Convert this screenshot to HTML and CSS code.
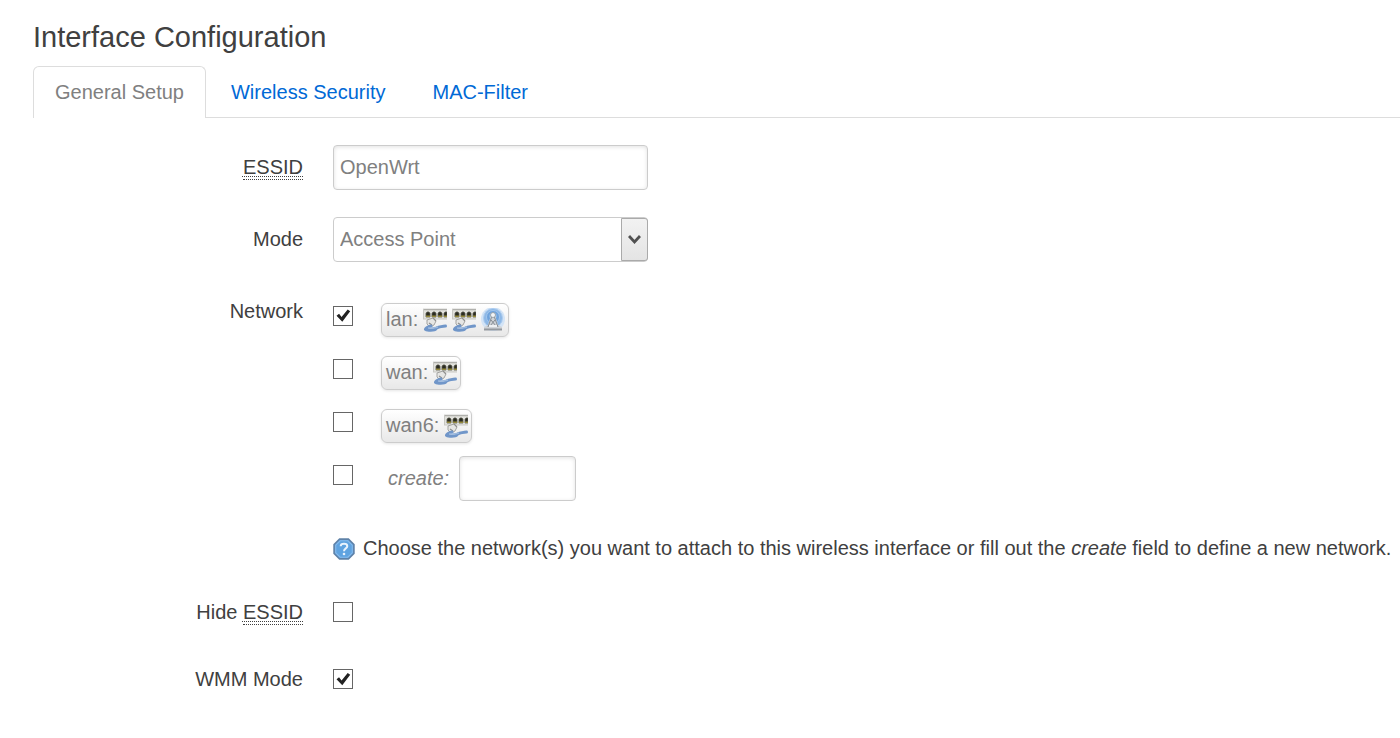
FILE: index.html
```html
<!DOCTYPE html>
<html lang="en">
<head>
    <meta charset="UTF-8">
    <meta name="viewport" content="width=device-width, initial-scale=1.0">
    <title>Interface Configuration</title>
    <link rel="stylesheet" href="styles.css">
</head>
<body>
    <!-- Shared icons -->
    <svg class="icon-defs" aria-hidden="true">
        <symbol id="icon-ethernet" viewBox="0 0 24 24">
            <rect x="0" y="1" width="24" height="10" fill="#e2e2dd"/>
            <path d="M0 1.500h24" stroke="#b0b0ac" stroke-width="1.500"/>
            <path d="M.5 1v10M0 11h24" stroke="#c8c8c4" stroke-width="1"/>
            <path d="M3 5.500l1-1.500h2l1 1.500V9H3zM9 5.500L10 4h2l1 1.500V9H9zM15 5.500L16 4h2l1 1.500V9h-4zM21 5.500L22 4h2v5h-3z" fill="#2b2c22" stroke="#56564a" stroke-width=".8"/>
            <path d="M3 7.500h4V9H3zM9 7.500h4V9H9zM15 7.500h4V9h-4zM21 7.500h3V9h-3z" fill="#958a3c"/>
            <path d="M4 12l6-2 3 3-2 4-4 2-3-3z" fill="#e6e6e4" stroke="#a3a3a1" stroke-width="1"/>
            <path d="M10 10l3 3M6 15l3 2" stroke="#8f8f8d" stroke-width="1.200" fill="none"/>
            <path d="M8 18c-3 1-6 2-5.500 3.500 1 1.500 6 .5 9 .2 2-.2 1-2 4-2.500s4-1 7-1.200" fill="none" stroke="#7096c9" stroke-width="3" stroke-linecap="round"/>
            <path d="M5 20c4 0 7 0 10-1" fill="none" stroke="#9ab8de" stroke-width="1.500"/>
        </symbol>
        <symbol id="icon-wifi" viewBox="0 0 24 24">
            <circle cx="12" cy="11" r="12" fill="#d3e4f6"/>
            <circle cx="12" cy="10" r="9.500" fill="#8db8e6" stroke="#aecdf0" stroke-width="1"/>
            <circle cx="12" cy="9" r="6.500" fill="#6ea2dc" stroke="#a3c6ed" stroke-width="1"/>
            <circle cx="12" cy="8" r="3.500" fill="#a9ccf1"/>
            <path d="M3 22v-3l4-2 3-10h4l3 10 4 2v3z" fill="#d0d4d8"/>
            <path d="M11 8L7 19M13 8l4 11M10 12l5 6M14 12l-5 6" fill="none" stroke="#858c93" stroke-width="1"/>
            <path d="M8 18h8" stroke="#eef0f2" stroke-width="2"/>
            <path d="M3 21.500h18" stroke="#94999e" stroke-width="2"/>
            <circle cx="12" cy="7" r="2.500" fill="#f2f4f6" stroke="#8c949c" stroke-width=".8"/>
        </symbol>
    </svg>

    <main class="page">
        <h2 class="page-title">Interface Configuration</h2>
        <nav class="tabs">
            <a class="tab active" href="#general">General Setup</a>
            <a class="tab" href="#security">Wireless Security</a>
            <a class="tab" href="#macfilter">MAC-Filter</a>
        </nav>

        <form class="settings" id="general">
            <div class="row">
                <label class="row-label" for="essid"><abbr title="Extended Service Set Identifier">ESSID</abbr></label>
                <input class="text-input" type="text" id="essid" value="OpenWrt">
            </div>
            <div class="row">
                <label class="row-label" for="mode">Mode</label>
                <div class="select-wrap">
                    <select class="select" id="mode">
                        <option>Access Point</option>
                    </select>
                    <span class="select-arrow"><svg width="13" height="10" viewBox="0 0 13 10"><path d="M1 1l5.500 6L12 1" fill="none" stroke="#505050" stroke-width="2.800"/></svg></span>
                </div>
            </div>
            <div class="row">
                <span class="row-label" id="network-label">Network</span>
                <div class="networks" role="group" aria-labelledby="network-label">
                    <div class="network">
                        <input class="checkbox" type="checkbox" id="net-lan" checked>
                        <label class="badge" for="net-lan">lan:
                            <svg class="icon"><use href="#icon-ethernet"/></svg>
                            <svg class="icon"><use href="#icon-ethernet"/></svg>
                            <svg class="icon"><use href="#icon-wifi"/></svg>
                        </label>
                    </div>
                    <div class="network">
                        <input class="checkbox" type="checkbox" id="net-wan">
                        <label class="badge" for="net-wan">wan:
                            <svg class="icon"><use href="#icon-ethernet"/></svg>
                        </label>
                    </div>
                    <div class="network">
                        <input class="checkbox" type="checkbox" id="net-wan6">
                        <label class="badge" for="net-wan6">wan6:
                            <svg class="icon"><use href="#icon-ethernet"/></svg>
                        </label>
                    </div>
                    <div class="network">
                        <input class="checkbox" type="checkbox" id="net-create">
                        <label class="create-label" for="net-create">create:</label>
                        <input class="text-input small" type="text" aria-label="New network name">
                    </div>
                    <p class="hint">
                        <svg class="hint-icon" viewBox="0 0 20 20" aria-hidden="true">
                            <path d="M6 1h8l5 5v8l-5 5H6l-5-5V6z" fill="#5fa3e0" stroke="#5f82a8" stroke-width="1.500"/>
                            <path d="M6.500 2.500h7l4 4v7l-4 4h-7l-4-4v-7z" fill="none" stroke="#85baec" stroke-width="1"/>
                            <path d="M7 7.500c0-3 6-3 6 0 0 2-3 2-3 4.500" fill="none" stroke="#e9f3fd" stroke-width="1.800"/>
                            <circle cx="10" cy="14.500" r="1.200" fill="#e9f3fd"/>
                        </svg>
                        <span>Choose the network(s) you want to attach to this wireless interface or fill out the <em>create</em> field to define a new network.</span>
                    </p>
                </div>
            </div>
            <div class="row">
                <label class="row-label" for="hide">Hide <abbr title="Extended Service Set Identifier">ESSID</abbr></label>
                <div class="check-field"><input class="checkbox" type="checkbox" id="hide"></div>
            </div>
            <div class="row">
                <label class="row-label" for="wmm">WMM Mode</label>
                <div class="check-field"><input class="checkbox" type="checkbox" id="wmm" checked></div>
            </div>
        </form>
    </main>
</body>
</html>
```

FILE: styles.css
```css
* {
    box-sizing: border-box;
}
body {
    margin: 0;
    background-color: #fff;
    color: #404040;
    font-family: "Liberation Sans", Arial, sans-serif;
    font-size: 20px;
    line-height: 27px;
}
.icon-defs {
    display: none;
}
.page {
    padding: 10px 0 28px 33px;
}
.page-title {
    margin: 0;
    font-size: 29px;
    font-weight: normal;
    line-height: 54px;
}

/* Tabs */
.tabs {
    display: flex;
    gap: 3px;
    margin-top: 2px;
    border-bottom: 1px solid #ddd;
}
.tab {
    padding: 12px 21px 11px;
    border: 1px solid transparent;
    border-bottom: none;
    border-radius: 6px 6px 0 0;
    color: #0069d6;
    text-decoration: none;
}
.tab.active {
    margin-bottom: -1px;
    border-color: #ddd;
    background-color: #fff;
    color: #808080;
}

/* Form rows */
.settings {
    display: flex;
    flex-direction: column;
    gap: 27px;
    padding-top: 27px;
}
.row {
    display: flex;
    align-items: flex-start;
    gap: 30px;
}
.row-label {
    flex: none;
    width: 270px;
    padding-top: 9px;
    text-align: right;
}
abbr[title] {
    padding-bottom: 1px;
    border-bottom: 1px dotted #404040;
    text-decoration: underline dotted 1px;
    text-underline-offset: 2px;
    text-decoration-skip-ink: none;
}
.text-input,
.select {
    width: 315px;
    height: 45px;
    padding: 0 6px 1px;
    border: 1px solid #ccc;
    border-radius: 4px;
    background-color: #fff;
    color: #808080;
    font: inherit;
}
.text-input {
    box-shadow: inset 0 1px 4px rgba(0, 0, 0, 0.12);
}
.text-input.small {
    width: 117px;
    margin-left: 10px;
}
.select-wrap {
    position: relative;
}
.select {
    display: block;
    appearance: none;
}
.select-arrow {
    position: absolute;
    top: 1px;
    right: 0;
    bottom: 1px;
    width: 27px;
    display: flex;
    align-items: center;
    justify-content: center;
    border: 1px solid #aaa;
    border-radius: 0 3px 3px 0;
    background: linear-gradient(#f2f2f2, #e4e4e4);
    pointer-events: none;
}
.checkbox {
    flex: none;
    display: block;
    appearance: none;
    width: 20px;
    height: 20px;
    margin: 0 0 8px;
    border: 1px solid #666;
    background-color: #fff;
}
.checkbox:checked::before {
    content: "";
    display: block;
    height: 18px;
    background-color: #222;
    clip-path: polygon(14% 51%, 28% 40%, 42% 58%, 76% 16%, 90% 27%, 46% 85%);
}
.check-field {
    padding-top: 12px;
}

/* Networks */
.networks {
    flex: 1;
    padding-top: 4px;
}
.network {
    display: flex;
    align-items: center;
    height: 53px;
}
.badge {
    display: flex;
    align-items: center;
    gap: 5px;
    height: 34px;
    margin-left: 28px;
    padding: 0 3px 0 4px;
    border: 1px solid #ccc;
    border-radius: 6px;
    background: linear-gradient(#fff, #e8e8e8);
    box-shadow: 0 1px 3px rgba(0, 0, 0, 0.1);
    color: #808080;
}
.icon {
    width: 24px;
    height: 24px;
}
.create-label {
    margin-left: 35px;
    color: #808080;
    font-style: italic;
}
.hint {
    display: flex;
    align-items: flex-start;
    gap: 8px;
    margin: 30px 0 1px;
}
.hint-icon {
    flex: none;
    width: 22px;
    height: 22px;
    margin-top: 3px;
}
```
